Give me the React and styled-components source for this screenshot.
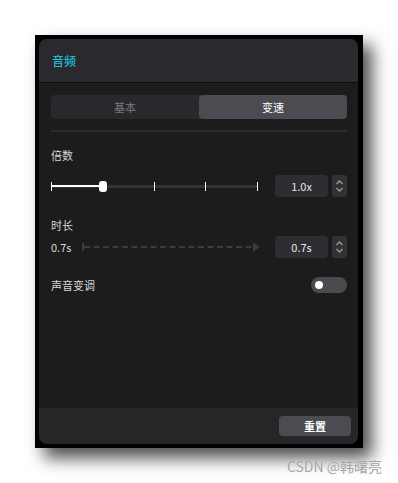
import React from 'react';
import styled, { createGlobalStyle } from 'styled-components';

const Global = createGlobalStyle`
  html, body {
    margin: 0;
    background: #ffffff;
  }
  body {
    font-family: "Noto Sans CJK SC", "Noto Sans", sans-serif;
  }
`;

let Page = styled.div`
  position: relative;
  width: 398px;
  height: 483px;
  padding: 35px 0 0 35px;
  box-sizing: border-box;
`;

let Frame = styled.div`
  width: 328px;
  height: 413px;
  box-sizing: border-box;
  padding: 4px 5px 4px 4px;
  background: #000;
  box-shadow: 9px 10px 16px rgba(0, 0, 0, 0.7);
`;

let Panel = styled.div`
  height: 100%;
  display: flex;
  flex-direction: column;
  border-radius: 8px;
  overflow: hidden;
  background: #1c1c1c;
`;

let Header = styled.div`
  height: 43px;
  flex: none;
  display: flex;
  align-items: center;
  padding: 0 13px;
  background: #29292e;
  border-bottom: 1px solid #0f0f10;
`;

let Title = styled.h1`
  margin: 0;
  font-size: 12px;
  font-weight: 500;
  color: #1ebdd0;
`;

let Body = styled.div`
  flex: 1;
  display: flex;
  flex-direction: column;
  padding: 12px 11px 0 12px;
`;

let Tabs = styled.div`
  display: flex;
  height: 24px;
  border-radius: 4px;
  background: #29292d;
`;

let Tab = styled.div`
  flex: 1;
  display: flex;
  align-items: center;
  justify-content: center;
  border-radius: 4px;
  font-size: 11px;
  color: ${(p) => (p.active ? '#ffffff' : '#7a7a7e')};
  background: ${(p) => (p.active ? '#4b4b51' : 'transparent')};
`;

let Divider = styled.div`
  height: 2px;
  margin-top: 11px;
  background: #2c2c2e;
`;

let Label = styled.div`
  font-size: 11px;
  line-height: 16px;
  color: #d6d6d6;
  margin-top: ${(p) => p.top || 0}px;
`;

let Row = styled.div`
  display: flex;
  align-items: center;
  height: 22px;
  margin-top: ${(p) => p.top || 0}px;
`;

let Slider = {};
Slider.Track = styled.div`
  position: relative;
  width: 206px;
  height: 3px;
  background: #333335;
`;

Slider.Fill = styled.div`
  position: absolute;
  left: 0;
  top: 0.5px;
  height: 2px;
  background: #ffffff;
`;

Slider.Tick = styled.div`
  position: absolute;
  top: -3px;
  width: 1px;
  height: 9px;
  margin-left: -0.5px;
  background: #ffffff;
`;

Slider.Thumb = styled.div`
  position: absolute;
  top: -4px;
  width: 8px;
  height: 11px;
  margin-left: -4px;
  border-radius: 3px;
  background: #ffffff;
`;

let Spacer = styled.div`
  flex: 1;
`;

let NumberBox = styled.div`
  display: flex;
  gap: 4px;
`;

let Field = styled.div`
  width: 53px;
  height: 22px;
  display: flex;
  align-items: center;
  justify-content: center;
  border-radius: 4px;
  background: #2e2e32;
  font-size: 11px;
  color: #e6e6e6;
`;

let Stepper = styled.div`
  width: 15px;
  height: 22px;
  display: flex;
  align-items: center;
  justify-content: center;
  border-radius: 3px;
  background: #323235;
`;

let Value = styled.span`
  width: 31px;
  font-size: 11px;
  color: #d6d6d6;
`;

let ToggleRow = styled.div`
  display: flex;
  align-items: center;
  justify-content: space-between;
  margin-top: 19px;
`;

let Toggle = styled.div`
  width: 36px;
  height: 16px;
  box-sizing: border-box;
  padding-left: 4px;
  display: flex;
  align-items: center;
  border-radius: 8px;
  background: #4a4a4f;

  &::before {
    content: '';
    width: 8px;
    height: 8px;
    border-radius: 50%;
    background: #ffffff;
  }
`;

let Footer = styled.div`
  height: 36px;
  flex: none;
  display: flex;
  align-items: center;
  justify-content: flex-end;
  padding: 0 7px;
  background: #262629;
`;

let Button = styled.button`
  width: 72px;
  height: 20px;
  border: none;
  border-radius: 4px;
  background: #4b4b51;
  color: #ffffff;
  font-family: inherit;
  font-size: 11px;
  font-weight: 600;
  padding: 0;
`;

let Watermark = styled.div`
  position: absolute;
  right: 16px;
  top: 456px;
  font-family: "Noto Sans CJK SC", sans-serif;
  font-size: 14px;
  line-height: 20px;
  color: #a4a4a4;
  text-shadow: 0 0 1px rgba(255, 255, 255, 0.8);
`;

function Chevrons() {
  return (
    <svg width="9" height="14" viewBox="0 0 9 14">
      <path d="M1.5 5 L4.5 2 L7.5 5" fill="none" stroke="#9a9a9e" strokeWidth="1.3" />
      <path d="M1.5 9 L4.5 12 L7.5 9" fill="none" stroke="#9a9a9e" strokeWidth="1.3" />
    </svg>
  );
}

function NumberInput({ value }) {
  return (
    <NumberBox>
      <Field>{value}</Field>
      <Stepper>
        <Chevrons />
      </Stepper>
    </NumberBox>
  );
}

function DashedArrow() {
  return (
    <svg width="180" height="12" viewBox="0 0 180 12">
      <line x1="1" y1="2" x2="1" y2="10" stroke="#3c3c3e" strokeWidth="2" />
      <line x1="2" y1="6" x2="170" y2="6" stroke="#3c3c3e" strokeWidth="2" strokeDasharray="6 3.5" />
      <path d="M171 1.5 L178 6 L171 10.5 Z" fill="#3c3c3e" />
    </svg>
  );
}

export default function App() {
  let ticks = [0, 25, 50, 75, 100];
  let speed = 25;

  return (
    <Page>
      <Global />
      <Frame>
        <Panel>
          <Header>
            <Title>音频</Title>
          </Header>
          <Body>
            <Tabs>
              <Tab>基本</Tab>
              <Tab active>变速</Tab>
            </Tabs>
            <Divider />

            <Label top={15}>倍数</Label>
            <Row top={12}>
              <Slider.Track>
                <Slider.Fill style={{ width: `${speed}%` }} />
                {ticks.map((t) => (
                  <Slider.Tick key={t} style={{ left: `${t}%` }} />
                ))}
                <Slider.Thumb style={{ left: `${speed}%` }} />
              </Slider.Track>
              <Spacer />
              <NumberInput value="1.0x" />
            </Row>

            <Label top={20}>时长</Label>
            <Row top={3}>
              <Value>0.7s</Value>
              <DashedArrow />
              <Spacer />
              <NumberInput value="0.7s" />
            </Row>

            <ToggleRow>
              <Label>声音变调</Label>
              <Toggle />
            </ToggleRow>
          </Body>
          <Footer>
            <Button>重置</Button>
          </Footer>
        </Panel>
      </Frame>
      <Watermark>CSDN @韩曙亮</Watermark>
    </Page>
  );
}
